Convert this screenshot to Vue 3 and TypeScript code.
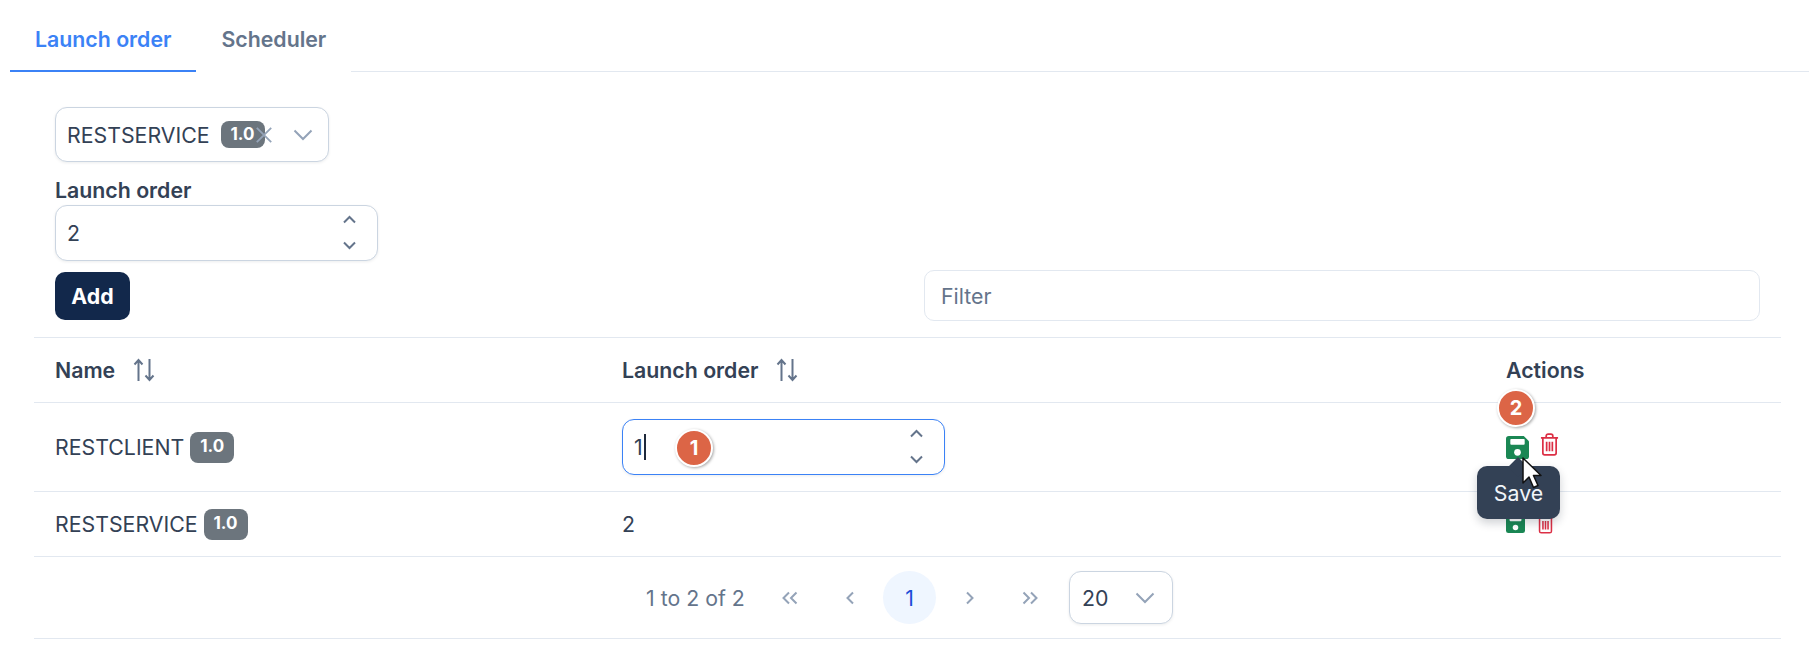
<script setup lang="ts">
interface Row {
  name: string
  order: string
  editing: boolean
}
const rows: Row[] = [
  { name: 'RESTCLIENT', order: '1', editing: true },
  { name: 'RESTSERVICE', order: '2', editing: false },
]
</script>

<template>
  <div class="page">
    <nav class="tabs">
      <div class="tab active">Launch order</div>
      <div class="tab">Scheduler</div>
      <div class="tab-rest"></div>
    </nav>

    <section class="panel">
      <div class="form">
        <div class="select main-select">
          <span class="sel-text">RESTSERVICE</span>
          <span class="badge">1.0</span>
          <svg class="clear" viewBox="0 0 20 20"><path d="M2 2 18 18M18 2 2 18" /></svg>
          <svg class="chev" viewBox="0 0 20 12"><path d="M1.5 1.5 10 10l8.500-8.500" /></svg>
        </div>
        <label class="label">Launch order</label>
        <div class="num-input">
          <span>2</span>
          <div class="spin">
            <svg viewBox="0 0 14 9"><path d="M1.500 7.500 7 2l5.500 5.500" /></svg>
            <svg viewBox="0 0 14 9"><path d="M1.500 1.500 7 7l5.500-5.500" /></svg>
          </div>
        </div>
      </div>

      <div class="toolbar">
        <button class="add">Add</button>
        <div class="filter">Filter</div>
      </div>

      <div class="table">
        <div class="row head">
          <div class="cell th">
            Name
            <svg class="sort" viewBox="0 0 22 24"><path d="M5.500 23V2M1.500 6.500 5.500 2l4 4.500M16.500 1v21M12.500 17.500l4 4.500 4-4.500" /></svg>
          </div>
          <div class="cell th">
            Launch order
            <svg class="sort" viewBox="0 0 22 24"><path d="M5.500 23V2M1.500 6.500 5.500 2l4 4.500M16.500 1v21M12.500 17.500l4 4.500 4-4.500" /></svg>
          </div>
          <div class="cell th">Actions</div>
        </div>

        <div v-for="r in rows" :key="r.name" class="row" :class="{ tall: r.editing }">
          <div class="cell">
            {{ r.name }}<span class="badge">1.0</span>
          </div>
          <div class="cell">
            <div v-if="r.editing" class="num-input focus">
              <span class="val">{{ r.order }}<i class="caret"></i></span>
              <div class="spin">
                <svg viewBox="0 0 14 9"><path d="M1.500 7.500 7 2l5.500 5.500" /></svg>
                <svg viewBox="0 0 14 9"><path d="M1.500 1.500 7 7l5.500-5.500" /></svg>
              </div>
              <span class="step step-one">1</span>
            </div>
            <template v-else>{{ r.order }}</template>
          </div>
          <div class="cell actions" :class="{ small: !r.editing }">
            <svg class="save" viewBox="0 0 24 24">
              <path fill="#1a8754" d="M3 0h15.500L24 5.500V21a3 3 0 0 1-3 3H3a3 3 0 0 1-3-3V3a3 3 0 0 1 3-3Z" />
              <rect x="4.500" y="3" width="15" height="6" rx="1" fill="#fff" />
              <circle cx="12" cy="17" r="3.500" fill="#fff" />
            </svg>
            <svg class="trash" viewBox="0 0 20 24">
              <path class="trash-line" d="M1 5h18M6.500 5V3a2 2 0 0 1 2-2h3a2 2 0 0 1 2 2v2M3 5v16a2 2 0 0 0 2 2h10a2 2 0 0 0 2-2V5M7 9v10M10 9v10M13 9v10" />
            </svg>
          </div>
        </div>

        <div class="pager">
          <span class="count">1 to 2 of 2</span>
          <button class="pg">
            <svg viewBox="0 0 18 14"><path d="M8 1.500 2.500 7 8 12.500M15.500 1.500 10 7l5.500 5.500" /></svg>
          </button>
          <button class="pg">
            <svg viewBox="0 0 18 14"><path d="M12 1.500 6.500 7l5.500 5.500" /></svg>
          </button>
          <button class="pg current">1</button>
          <button class="pg">
            <svg viewBox="0 0 18 14"><path d="M6 1.500 11.500 7 6 12.500" /></svg>
          </button>
          <button class="pg">
            <svg viewBox="0 0 18 14"><path d="M2.500 1.500 8 7l-5.500 5.500M10 1.500 15.500 7 10 12.500" /></svg>
          </button>
          <div class="select page-size">
            <span>20</span>
            <svg class="chev" viewBox="0 0 20 12"><path d="M1.500 1.500 10 10l8.500-8.500" /></svg>
          </div>
        </div>
      </div>
    </section>

    <!-- overlays -->
    <span class="step step-two">2</span>
    <div class="tooltip">Save</div>
    <svg class="cursor" viewBox="0 0 20 32">
      <path d="M1 1v25l6-6 4.500 10.500 4.500-2L11.500 18.500H19Z" fill="#fff" stroke="#111" stroke-width="1.500" stroke-linejoin="round" />
    </svg>
  </div>
</template>

<style>
html,
body {
  margin: 0;
  background: #fff;
}
</style>

<style scoped>
.page {
  position: relative;
  width: 1809px;
  height: 664px;
  overflow: hidden;
  background: #fff;
  color: #334155;
  font-family: Inter, "Liberation Sans", sans-serif;
  font-size: 21.3px;
  box-sizing: border-box;
}
.tabs {
  display: flex;
  height: 72px;
  padding-left: 10px;
}
.tab {
  box-sizing: border-box;
  height: 72px;
  padding: 8px 25px 0;
  display: flex;
  align-items: center;
  font-weight: 600;
  color: #64748b;
  border-bottom: 2px solid #fff;
}
.tab.active {
  color: #3b82f6;
  border-bottom-color: #3b82f6;
}
.tab-rest {
  flex: 1;
  border-bottom: 1px solid #e2e8f0;
  height: 71px;
}
.panel {
  padding: 35px 28px 0 34px;
}
.form {
  padding-left: 21px;
  display: flex;
  flex-direction: column;
  align-items: flex-start;
}
.select,
.num-input {
  box-sizing: border-box;
  display: flex;
  align-items: center;
  border: 1px solid #cbd5e1;
  border-radius: 12px;
  background: #fff;
  box-shadow: 0 1px 3px rgba(15, 23, 42, 0.08);
}
.main-select {
  width: 274px;
  height: 55px;
  padding-left: 11px;
}
.sel-text {
  white-space: nowrap;
}
.badge {
  display: inline-flex;
  align-items: center;
  justify-content: center;
  box-sizing: border-box;
  width: 44px;
  height: 31px;
  margin-left: 6px;
  border-radius: 8px;
  background: #6c757d;
  color: #fff;
  font-size: 17px;
  font-weight: 700;
  padding-bottom: 3px;
}
.main-select .badge {
  height: 27px;
  margin-left: 11px;
  flex: none;
  padding-bottom: 1px;
}
.clear {
  width: 18px;
  height: 18px;
  margin-left: -10px;
  flex: none;
}
.clear path,
.chev path {
  fill: none;
  stroke: #94a3b8;
  stroke-width: 2;
}
.chev {
  width: 20px;
  height: 12px;
  flex: none;
}
.main-select .chev {
  margin-left: 20px;
}
.label {
  margin-top: 15px;
  height: 28px;
  line-height: 26px;
  font-weight: 600;
}
.num-input {
  position: relative;
  width: 323px;
  height: 56px;
  padding-left: 11px;
  justify-content: space-between;
}
.spin {
  display: flex;
  flex-direction: column;
  gap: 17px;
  margin-right: 20px;
  margin-top: -1px;
}
.spin svg {
  display: block;
  width: 15px;
  height: 9px;
}
.spin path {
  fill: none;
  stroke: #64748b;
  stroke-width: 2;
}
.toolbar {
  display: flex;
  align-items: center;
  justify-content: space-between;
  padding: 9px 21px 0;
  margin-bottom: 16px;
}
.add {
  width: 75px;
  height: 48px;
  border: 0;
  border-radius: 10px;
  background: #12284b;
  color: #fff;
  font: 700 21.3px Inter, "Liberation Sans", sans-serif;
}
.filter {
  box-sizing: border-box;
  width: 836px;
  height: 51px;
  padding-left: 16px;
  display: flex;
  align-items: center;
  border: 1px solid #e2e8f0;
  border-radius: 10px;
  color: #64748b;
}
.table {
  border-top: 1px solid #e2e8f0;
}
.row {
  display: grid;
  grid-template-columns: 567px 884px 296px;
  box-sizing: border-box;
  height: 65px;
  border-bottom: 1px solid #e2e8f0;
}
.row.head {
  height: 65px;
}
.row.tall {
  height: 89px;
}
.cell {
  display: flex;
  align-items: center;
  padding-left: 21px;
  min-width: 0;
}
.th {
  font-weight: 600;
}
.sort {
  width: 22px;
  height: 24px;
  margin-left: 18px;
}
.sort path {
  fill: none;
  stroke: #64748b;
  stroke-width: 2;
}
.focus {
  border-color: #3b82f6;
  margin-left: 0;
}
.val {
  display: inline-flex;
  align-items: center;
}
.caret {
  width: 2px;
  height: 26px;
  margin-left: 1px;
  background: #1e293b;
}
.step {
  position: absolute;
  box-sizing: content-box;
  width: 34px;
  height: 34px;
  border: 2px solid #fff;
  border-radius: 50%;
  background: #dc6546;
  color: #fff;
  font-size: 20px;
  font-weight: 700;
  display: flex;
  align-items: center;
  justify-content: center;
  box-shadow: 1px 1px 3px rgba(0, 0, 0, 0.35);
}
.step-one {
  left: 52px;
  top: 9px;
}
.step-two {
  left: 1497px;
  top: 389px;
}
.actions {
  align-items: flex-start;
  padding-top: 33px;
}
.save {
  width: 23px;
  height: 23px;
  flex: none;
}
.trash {
  width: 19px;
  height: 23px;
  margin: -3px 0 0 11px;
  flex: none;
}
.trash-line {
  fill: none;
  stroke: #dc2f45;
  stroke-width: 1.800;
}
.actions.small {
  padding-top: 21px;
}
.actions.small .save {
  width: 19px;
  height: 21px;
}
.actions.small .trash {
  width: 17px;
  height: 21px;
  margin: 0 0 0 12px;
}
.pager {
  box-sizing: border-box;
  height: 82px;
  border-bottom: 1px solid #e2e8f0;
  display: flex;
  align-items: center;
  padding-left: 612px;
}
.count {
  color: #64748b;
  width: 117px;
}
.pg {
  width: 53px;
  height: 53px;
  padding: 0;
  margin-right: 7px;
  border: 0;
  border-radius: 50%;
  background: transparent;
  display: flex;
  align-items: center;
  justify-content: center;
  font: 400 21.3px Inter, "Liberation Sans", sans-serif;
}
.pg svg {
  width: 18px;
  height: 14px;
}
.pg path {
  fill: none;
  stroke: #94a3b8;
  stroke-width: 2;
}
.pg.current {
  background: #eff6ff;
  color: #1d4ed8;
}
.page-size {
  width: 104px;
  height: 53px;
  margin-left: 6px;
  padding: 0 17px 0 12px;
  justify-content: space-between;
}
.tooltip {
  position: absolute;
  left: 1477px;
  top: 466px;
  width: 83px;
  height: 53px;
  border-radius: 10px;
  background: #334155;
  color: #f1f5f9;
  display: flex;
  align-items: center;
  justify-content: center;
  box-shadow: 0 4px 10px rgba(15, 23, 42, 0.2);
}
.tooltip::before {
  content: "";
  position: absolute;
  left: 34px;
  top: -6px;
  width: 14px;
  height: 14px;
  background: #334155;
  transform: rotate(45deg);
}
.cursor {
  position: absolute;
  left: 1522px;
  top: 457px;
  width: 20px;
  height: 32px;
}
</style>
